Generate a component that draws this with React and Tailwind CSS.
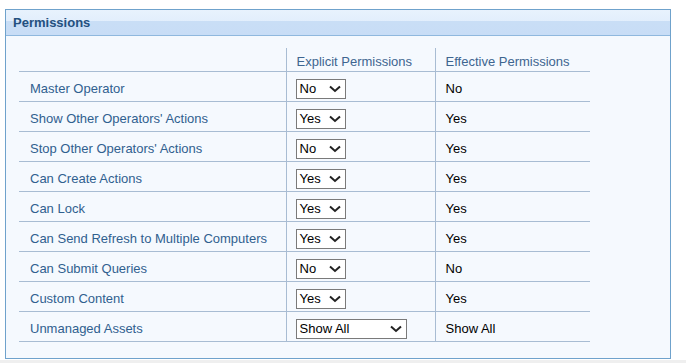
import React from "react";

const rows = [
  { label: "Master Operator", value: "No", effective: "No" },
  { label: "Show Other Operators' Actions", value: "Yes", effective: "Yes" },
  { label: "Stop Other Operators' Actions", value: "No", effective: "Yes" },
  { label: "Can Create Actions", value: "Yes", effective: "Yes" },
  { label: "Can Lock", value: "Yes", effective: "Yes" },
  { label: "Can Send Refresh to Multiple Computers", value: "Yes", effective: "Yes" },
  { label: "Can Submit Queries", value: "No", effective: "No" },
  { label: "Custom Content", value: "Yes", effective: "Yes" },
  { label: "Unmanaged Assets", value: "Show All", effective: "Show All", wide: true },
];

function FakeSelect({ value, wide }) {
  return (
    <div
      className={`flex items-center justify-between h-[20px] border border-[#7a7a7a] bg-white pl-[3px] pr-[4px] text-[13px] text-black ${
        wide ? "w-[111px]" : "w-[50px]"
      }`}
    >
      <span>{value}</span>
      <svg width="12" height="8" viewBox="0 0 12 8">
        <path d="M1 1.5 L6 6 L11 1.5" fill="none" stroke="#222" strokeWidth="2" />
      </svg>
    </div>
  );
}

export default function App() {
  return (
    <div className="h-[363px] w-[686px] flex flex-col bg-white font-['Liberation_Sans',Arial,sans-serif]">
      <div className="ml-[5px] mt-[9px] w-[666px] h-[350px] border border-[#6fa2cc] bg-[#f5f9fe]">
        {/* Header */}
        <div className="h-[26px] border-b border-[#8fb8de] bg-[linear-gradient(to_bottom,#e8f2fd_0%,#e2eefc_45%,#c9def6_46%,#c8ddf6_100%)] flex items-center pl-[7px]">
          <span className="text-[13px] font-bold text-[#24507f]">Permissions</span>
        </div>

        <table className="ml-[13px] mt-[12px] border-collapse text-[13px]">
          <thead>
            <tr className="h-[23px] border-b border-[#a8bcd3]">
              <th className="w-[267px]"></th>
              <th className="w-[149px] border-l border-[#a8bcd3] pl-[10px] pt-[6px] leading-[16px] text-left font-normal text-[#3e6590]">
                Explicit Permissions
              </th>
              <th className="w-[155px] border-l border-[#a8bcd3] pl-[10px] pt-[6px] leading-[16px] text-left font-normal text-[#3e6590]">
                Effective Permissions
              </th>
            </tr>
          </thead>
          <tbody>
            {rows.map((r) => (
              <tr key={r.label} className="h-[30px] border-b border-[#a8bcd3]">
                <td className="pl-[11px] pt-[5px] text-[#30608f]">{r.label}</td>
                <td className="border-l border-[#a8bcd3] pl-[9px] pt-[5px]">
                  <FakeSelect value={r.value} wide={r.wide} />
                </td>
                <td className="border-l border-[#a8bcd3] pl-[10px] pt-[5px] text-black">{r.effective}</td>
              </tr>
            ))}
          </tbody>
        </table>
      </div>
      <div className="flex-1 mt-[1px] bg-[#efefef]"></div>
    </div>
  );
}
